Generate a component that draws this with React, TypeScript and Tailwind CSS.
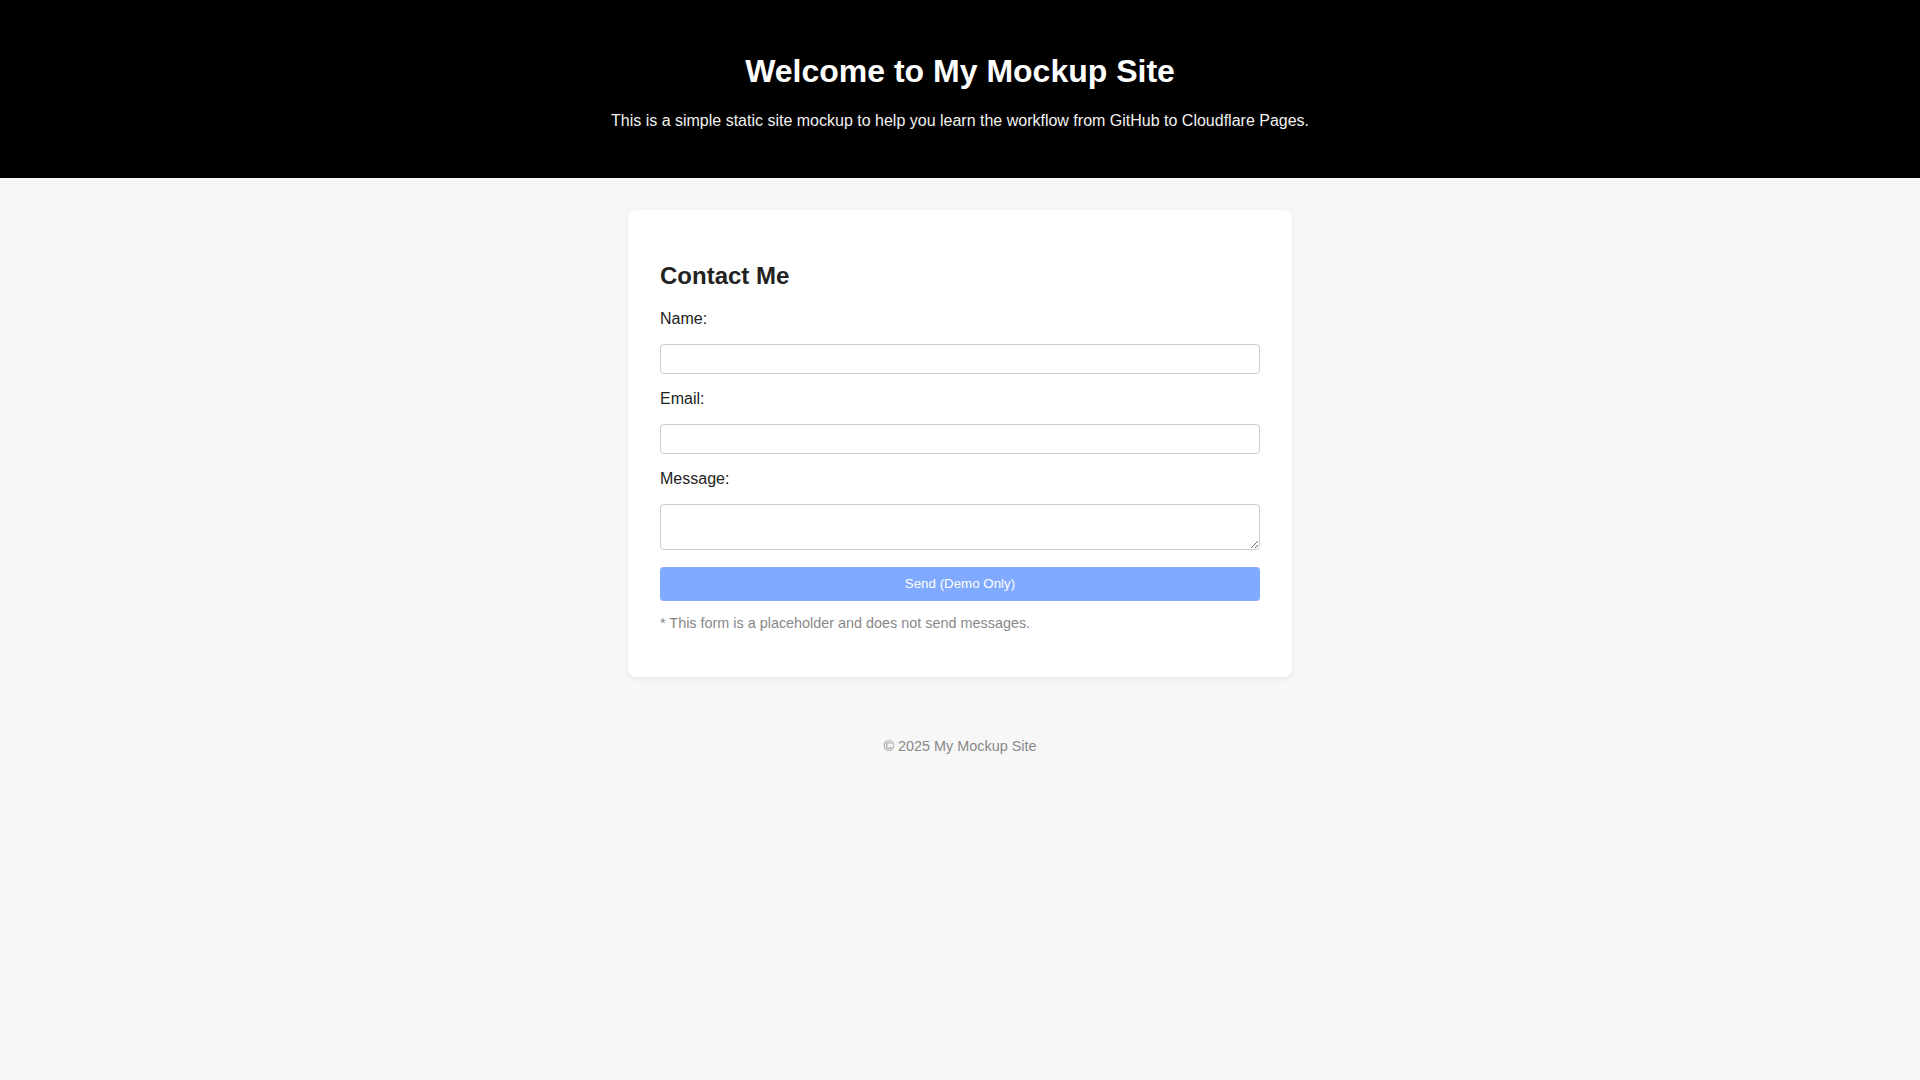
import React from "react";

const App = () => {
  return (
    <div className="min-h-screen bg-[#f7f7f7] font-['Liberation_Sans',Arial,sans-serif] text-[#222]">
      {/* Header */}
      <header className="bg-black text-white text-center pt-8 pb-[32.3px]">
        <h1 className="text-[32px] font-bold leading-[1.15] my-[21.44px]">Welcome to My Mockup Site</h1>
        <p className="text-base leading-[1.15] mb-4 text-[#f2f2f2]">
          This is a simple static site mockup to help you learn the workflow from GitHub to Cloudflare Pages.
        </p>
      </header>

      {/* Contact card */}
      <main className="mt-8 mx-auto max-w-[664px] bg-white rounded-lg shadow-[0_2px_6px_rgba(0,0,0,0.06)] p-8">
        <h2 className="text-2xl font-bold leading-[1.15] mt-[19.92px] mb-[20px]">Contact Me</h2>
        <form onSubmit={(e) => e.preventDefault()}>
          <label htmlFor="name" className="block text-base leading-[1.15]">Name:</label>
          <input
            id="name"
            type="text"
            className="block w-full mt-[16.2px] h-[29.4px] px-[6px] border border-[#ccc] rounded text-[13.33px] outline-none"
          />
          <label htmlFor="email" className="block mt-[16px] text-base leading-[1.15]">Email:</label>
          <input
            id="email"
            type="email"
            className="block w-full mt-[16.2px] h-[29.4px] px-[6px] border border-[#ccc] rounded text-[13.33px] outline-none"
          />
          <label htmlFor="message" className="block mt-[16px] text-base leading-[1.15]">Message:</label>
          <textarea
            id="message"
            className="block w-full mt-[16.2px] h-[45.5px] p-[6px] border border-[#ccc] rounded text-[13.33px] outline-none"
          />
          <button
            type="submit"
            className="block w-full mt-[16.7px] h-[34.7px] bg-[#80aaff] text-white text-[13.33px] leading-[1.15] rounded"
          >
            Send (Demo Only)
          </button>
        </form>
        <p className="text-[14.4px] leading-[1.15] text-[#888] mt-[13.4px] mb-[14px]">
          * This form is a placeholder and does not send messages.
        </p>
      </main>

      {/* Footer */}
      <footer className="mt-[61px] text-center text-[14.4px] leading-[1.15] text-[#888]">
        © 2025 My Mockup Site
      </footer>
    </div>
  );
};

export default App;
